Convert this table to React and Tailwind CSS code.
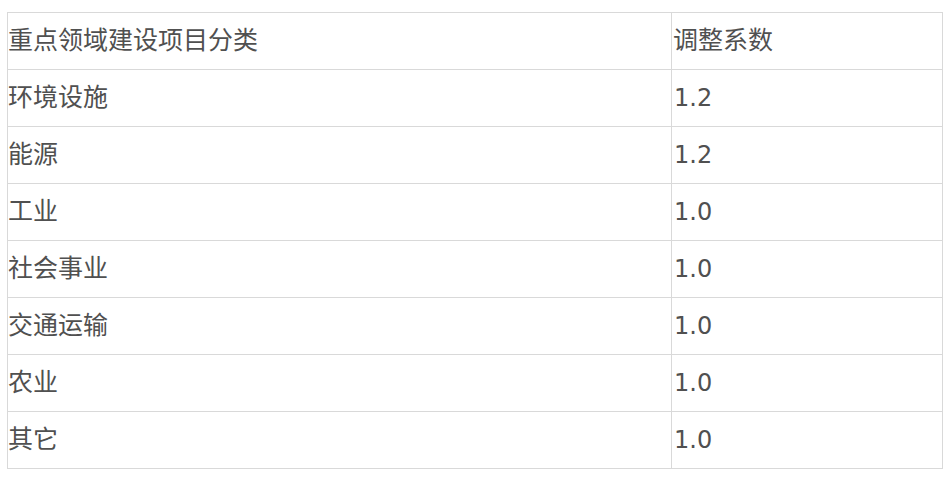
const rows = [
  ["环境设施", "1.2"],
  ["能源", "1.2"],
  ["工业", "1.0"],
  ["社会事业", "1.0"],
  ["交通运输", "1.0"],
  ["农业", "1.0"],
  ["其它", "1.0"],
];

export default function App() {
  return (
    <div className="bg-white w-[948px] h-[479px] pt-[12px] pl-[7px]">
      <table
        className="border-collapse w-[936px] text-[24px] text-[#505050]"
        style={{ fontFamily: '"DejaVu Sans", "Noto Sans CJK SC", sans-serif' }}
      >
        <tbody>
          <tr className="h-[57px]">
            <td className="border border-[#d9d9d9] w-[664px] p-0 text-[25px] align-middle">
              重点领域建设项目分类
            </td>
            <td className="border border-[#d9d9d9] p-0 pl-[1px] text-[25px] align-middle">
              调整系数
            </td>
          </tr>
          {rows.map(([name, value]) => (
            <tr key={name} className="h-[57px]">
              <td className="border border-[#d9d9d9] p-0 text-[25px] align-middle">{name}</td>
              <td className="border border-[#d9d9d9] p-0 pl-[2px] align-middle">{value}</td>
            </tr>
          ))}
        </tbody>
      </table>
    </div>
  );
}
